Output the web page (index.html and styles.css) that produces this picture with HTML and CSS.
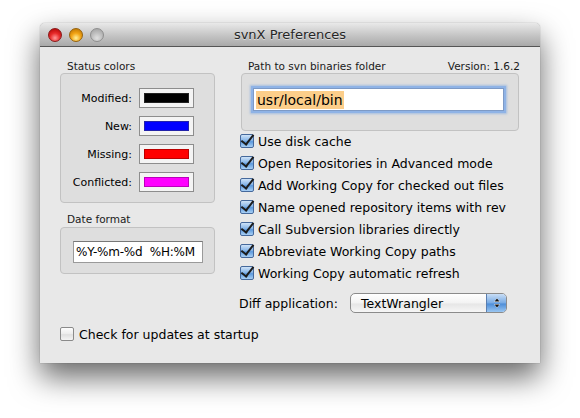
FILE: index.html
```html
<!DOCTYPE html>
<html>
<head>
<meta charset="utf-8">
<link rel="stylesheet" href="styles.css">
</head>
<body>
<div class="window">
  <div class="titlebar">
    <div class="lights">
      <span class="light red"></span>
      <span class="light yellow"></span>
      <span class="light grey"></span>
    </div>
    <div class="title">svnX Preferences</div>
  </div>
  <div class="content">
    <div class="main">
      <div class="leftcol">
        <div class="grouplabel">Status colors</div>
        <div class="box colors">
          <div class="crow"><span class="clabel">Modified:</span><span class="well"><span class="swatch black"></span></span></div>
          <div class="crow"><span class="clabel">New:</span><span class="well"><span class="swatch blue"></span></span></div>
          <div class="crow"><span class="clabel">Missing:</span><span class="well"><span class="swatch red"></span></span></div>
          <div class="crow"><span class="clabel">Conflicted:</span><span class="well"><span class="swatch magenta"></span></span></div>
        </div>
        <div class="grouplabel datelabel">Date format</div>
        <div class="box datebox">
          <div class="field datefield">%Y-%m-%d&nbsp; %H:%M</div>
        </div>
      </div>
      <div class="rightcol">
        <div class="grouplabel pathlabel"><span>Path to svn binaries folder</span><span class="version">Version: 1.6.2</span></div>
        <div class="box pathbox">
          <div class="field pathfield"><span class="sel">usr/local/bin</span></div>
        </div>
        <ul class="checks">
          <li><span class="cb on"></span>Use disk cache</li>
          <li><span class="cb on"></span>Open Repositories in Advanced mode</li>
          <li><span class="cb on"></span>Add Working Copy for checked out files</li>
          <li><span class="cb on"></span>Name opened repository items with rev</li>
          <li><span class="cb on"></span>Call Subversion libraries directly</li>
          <li><span class="cb on"></span>Abbreviate Working Copy paths</li>
          <li><span class="cb on"></span>Working Copy automatic refresh</li>
        </ul>
        <div class="diffrow">
          <span class="difflabel">Diff application:</span>
          <div class="popup">
            <span class="popuptext">TextWrangler</span>
            <span class="stepper">
              <svg width="8" height="12" viewBox="0 0 8 12"><path d="M4 1 L7 5 L1 5 Z" fill="#fff"/><path d="M4 11 L7 7 L1 7 Z" fill="#fff"/><path d="M4 1.5 L6.5 4.6 L1.5 4.6 Z" fill="#111"/><path d="M4 10.5 L6.5 7.4 L1.5 7.4 Z" fill="#111"/></svg>
            </span>
          </div>
        </div>
      </div>
    </div>
    <div class="updates"><span class="cb off"></span>Check for updates at startup</div>
  </div>
</div>
</body>
</html>
```

FILE: styles.css
```css
html, body {
  margin: 0;
  padding: 0;
  background: #ffffff;
}
body {
  width: 580px;
  height: 418px;
  overflow: hidden;
  font-family: "DejaVu Sans", "Lucida Grande", sans-serif;
  color: #000;
}
.window {
  margin: 23px 0 0 40px;
  width: 500px;
  height: 340px;
  background: #e8e8e8;
  border-radius: 5px 5px 0 0;
  box-shadow: 0 14px 30px rgba(0,0,0,0.6), 0 0 1px rgba(0,0,0,0.5);
  display: flex;
  flex-direction: column;
}
.titlebar {
  height: 23px;
  border-bottom: 1px solid #555;
  border-radius: 5px 5px 0 0;
  background: linear-gradient(#e9e9e9, #c4c4c4 55%, #a9a9a9);
  display: flex;
  align-items: center;
  position: relative;
}
.lights {
  display: flex;
  gap: 7px;
  padding-left: 8px;
  padding-top: 1px;
}
.light {
  width: 14px;
  height: 14px;
  border-radius: 50%;
  box-sizing: border-box;
}
.red {
  background: radial-gradient(circle at 50% 75%, #ff9a9a 0, #e82a2a 45%, #a80000 100%);
  border: 1px solid #8a1a1a;
}
.yellow {
  background: radial-gradient(circle at 50% 75%, #fff09a 0, #f2a415 45%, #b36c00 100%);
  border: 1px solid #96620c;
}
.grey {
  background: radial-gradient(circle at 50% 75%, #e0e0e0 0, #bdbdbd 50%, #9d9d9d 100%);
  border: 1px solid #8e8e8e;
}
.title {
  position: absolute;
  left: 0;
  right: 0;
  top: 4px;
  text-align: center;
  font-size: 13px;
  color: #262626;
  text-shadow: 0 1px 0 rgba(255,255,255,0.5);
}
.content {
  flex: 1;
  padding: 13px 0 0 20px;
  display: flex;
  flex-direction: column;
}
.main {
  display: flex;
  gap: 26px;
}
.leftcol {
  width: 155px;
  display: flex;
  flex-direction: column;
}
.grouplabel {
  font-size: 10.5px;
  line-height: 13px;
  height: 13px;
  padding-left: 7px;
  color: #1a1a1a;
}
.box {
  background: #dedede;
  border: 1px solid #c2c2c2;
  border-radius: 4px;
  box-sizing: border-box;
}
.colors {
  height: 130px;
  padding: 14px 20px 0 0;
  display: flex;
  flex-direction: column;
  gap: 8px;
}
.crow {
  display: flex;
  justify-content: flex-end;
  align-items: center;
  gap: 7px;
  height: 20px;
  font-size: 11px;
}
.well {
  width: 55px;
  height: 20px;
  box-sizing: border-box;
  border: 1px solid #8d8d8d;
  background: #f4f4f4;
  padding: 4px;
  display: flex;
}
.swatch {
  flex: 1;
  border: 1px solid #555;
}
.swatch.black { background: #000; border-color: #222; }
.swatch.blue { background: #0000ff; border-color: #2222aa; }
.swatch.red { background: #ff0000; border-color: #b00; }
.swatch.magenta { background: #ff00ff; border-color: #b0b; }
.datelabel {
  margin-top: 10px;
}
.datebox {
  margin-top: 1px;
  height: 47px;
  padding: 13px 0 0 12px;
}
.field {
  background: #fff;
  box-sizing: border-box;
  font-size: 12px;
  display: flex;
  align-items: center;
}
.datefield {
  width: 130px;
  height: 22px;
  border: 1px solid #9a9a9a;
  border-top-color: #777;
  padding-left: 2px;
  letter-spacing: -0.2px;
}
.rightcol {
  width: 278px;
  display: flex;
  flex-direction: column;
}
.pathlabel {
  display: flex;
  justify-content: space-between;
  padding-right: 0;
}
.version {
  margin-right: -1px;
}
.pathbox {
  height: 58px;
  padding: 14px 0 0 11px;
}
.pathfield {
  width: 251px;
  height: 23px;
  border: 1px solid #7d9ac6;
  box-shadow: 0 0 0 2px #8fb3e6, 0 0 2px 3px rgba(110,160,225,0.5);
  padding-left: 2px;
  font-size: 14px;
}
.sel {
  background: #fcce8a;
  padding: 1px 1px;
}
.checks {
  list-style: none;
  margin: -1px 0 0 0;
  padding: 0;
}
.checks li {
  height: 22px;
  display: flex;
  align-items: center;
  font-size: 12.5px;
  gap: 4px;
  margin-left: -1px;
}
.cb {
  width: 14px;
  height: 14px;
  box-sizing: border-box;
  border-radius: 2px;
  flex: none;
  position: relative;
}
.cb.on {
  border: 1px solid #45699c;
  background: linear-gradient(#cfe3f8, #7fb0e6 50%, #5b98dc 55%, #a9d0f5);
}
.cb.on::after {
  content: "";
  position: absolute;
  left: 3px;
  top: -3px;
  width: 5px;
  height: 11px;
  border-right: 2.5px solid #1c1c1c;
  border-bottom: 2.5px solid #1c1c1c;
  transform: rotate(38deg);
}
.cb.off {
  border: 1px solid #8a8a8a;
  background: linear-gradient(#fdfdfd, #ececec 50%, #e0e0e0 55%, #f4f4f4);
}
.diffrow {
  display: flex;
  align-items: center;
  margin-top: 9px;
  margin-left: -2px;
  font-size: 12.5px;
}
.difflabel {
  width: 111px;
}
.popup {
  width: 157px;
  height: 20px;
  box-sizing: border-box;
  border: 1px solid #8b8b8b;
  border-radius: 5px;
  background: linear-gradient(#ffffff, #f3f3f3 50%, #e6e6e6 55%, #f6f6f6);
  display: flex;
  align-items: center;
  overflow: hidden;
}
.popuptext {
  flex: 1;
  padding-left: 10px;
}
.stepper {
  width: 19px;
  height: 100%;
  background: linear-gradient(#c9def6, #77aae4 50%, #4d8dd8 55%, #9ac6f1);
  border-left: 1px solid #5a7eb0;
  display: flex;
  align-items: center;
  justify-content: center;
}
.updates {
  display: flex;
  align-items: center;
  gap: 5px;
  font-size: 12.5px;
  height: 22px;
  margin-top: 10px;
}
```
